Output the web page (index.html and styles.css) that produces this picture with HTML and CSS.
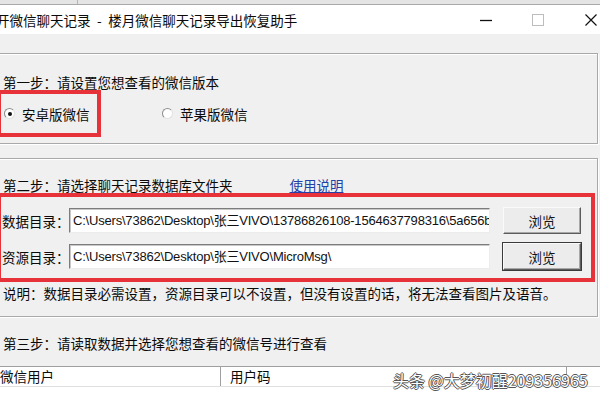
FILE: index.html
```html
<!DOCTYPE html>
<html lang="zh-CN">
<head>
<meta charset="utf-8">
<title>楼月微信聊天记录导出恢复助手</title>
<link rel="stylesheet" href="styles.css">
</head>
<body>
<div class="top-strip"><div class="strip-left"></div></div>
<div class="titlebar">
  <div class="title">开微信聊天记录<span class="dash">-</span>楼月微信聊天记录导出恢复助手</div>
  <div class="controls">
    <svg class="ctl ctl-min" width="12" height="12" viewBox="0 0 12 12"><line x1="0" y1="6.5" x2="12" y2="6.5" stroke="#111" stroke-width="1.3"/></svg>
    <svg class="ctl ctl-max" width="12" height="12" viewBox="0 0 12 12"><rect x="0.5" y="0.5" width="11" height="11" fill="none" stroke="#bdbdbd" stroke-width="1"/></svg>
    <svg class="ctl ctl-close" width="12" height="12" viewBox="0 0 12 12"><path d="M0.5 0.5 L11.5 11.5 M11.5 0.5 L0.5 11.5" stroke="#111" stroke-width="1.2" fill="none"/></svg>
  </div>
</div>
<div class="main">
  <section class="group group-1">
    <div class="step">第一步：请设置您想查看的微信版本</div>
    <div class="versions">
      <div class="mark mark-1">
        <label class="radio"><span class="dot checked"></span>安卓版微信</label>
      </div>
      <label class="radio radio-ios"><span class="dot"></span>苹果版微信</label>
    </div>
  </section>
  <section class="group group-2">
    <div class="step step-2">第二步：请选择聊天记录数据库文件夹<a class="help">使用说明</a></div>
    <div class="mark mark-2">
      <div class="row">
        <span class="label">数据目录：</span>
        <div class="field">C:\Users\73862\Desktop\张三VIVO\13786826108-1564637798316\5a656b</div>
        <button class="btn">浏览</button>
      </div>
      <div class="row">
        <span class="label">资源目录：</span>
        <div class="field">C:\Users\73862\Desktop\张三VIVO\MicroMsg\</div>
        <button class="btn btn-default">浏览</button>
      </div>
    </div>
    <div class="note">说明：数据目录必需设置，资源目录可以不设置，但没有设置的话，将无法查看图片及语音。</div>
  </section>
  <div class="step-3">第三步：请读取数据并选择您想查看的微信号进行查看</div>
  <div class="list">
    <div class="list-head">
      <div class="col col-user">微信用户</div>
      <div class="col col-code">用户码</div>
      <div class="col col-rest"></div>
    </div>
    <div class="list-body"></div>
  </div>
</div>
<div class="watermark">头条 @大梦初醒209356965</div>
</body>
</html>
```

FILE: styles.css
```css
* { box-sizing: border-box; }
html, body { margin: 0; padding: 0; }
body {
  width: 600px;
  height: 400px;
  overflow: hidden;
  position: relative;
  background: #f0f0f0;
  font-family: "Noto Sans CJK SC", sans-serif;
  font-size: 13.5px;
  color: #0a0a0a;
}

.top-strip {
  height: 5px;
  background: #e4e4e4;
  border-bottom: 1px solid #a9a9a9;
  display: flex;
}
.strip-left { width: 78px; border-right: 1px solid #b5b5b5; }

.titlebar {
  height: 29px;
  background: #fff;
  display: flex;
  align-items: center;
}
.title { margin-left: -4px; line-height: 16px; white-space: nowrap; }
.dash { margin: 0 6.5px; }
.controls { margin-left: auto; display: flex; align-items: center; }
.ctl { display: block; }
.ctl-min { margin-right: 40px; }
.ctl-max { margin-right: 41px; }
.ctl-close { margin-right: 3px; }

.main { padding-top: 19px; }

.group {
  margin-left: -10px;
  width: 608px;
  border: 1px solid #a9a9a9;
  box-shadow: inset 1px 1px 0 #fff, 1px 1px 0 #fff;
}
.group-1 { padding: 20px 0 6px; }
.step { line-height: 16px; padding-left: 12px; white-space: nowrap; }

.versions { display: flex; align-items: center; }
.mark { border: 4px solid #e8323a; }
.mark-1 {
  margin-left: 6px;
  width: 104px;
  height: 47px;
  display: flex;
  align-items: center;
  padding-left: 3px;
}
.radio { display: flex; align-items: center; line-height: 16px; white-space: nowrap; }
.dot {
  width: 11px;
  height: 11px;
  border-radius: 50%;
  border: 1px solid;
  border-color: #8c8c8c #e2e2e2 #e2e2e2 #8c8c8c;
  background: #fff;
  margin-right: 7px;
  display: flex;
  align-items: center;
  justify-content: center;
}
.dot.checked::after {
  content: "";
  width: 4px;
  height: 4px;
  border-radius: 50%;
  background: #111;
}
.radio-ios { margin-left: 61px; }

.group-2 { margin-top: 14px; padding: 18px 0 15px; }
.step-2 { display: flex; }
.help { margin-left: 57px; color: #2340a8; text-decoration: underline; }

.mark-2 {
  margin-left: 6px;
  width: 598px;
  padding: 10px 0 8px 1px;
  display: flex;
  flex-direction: column;
  gap: 9px;
}
.row { display: flex; align-items: center; height: 27px; }
.label { width: 67px; line-height: 16px; white-space: nowrap; }
.field {
  width: 421px;
  height: 25px;
  background: #fff;
  border: 1px solid;
  border-color: #7c7c7c #ececec #ececec #7c7c7c;
  box-shadow: inset 1px 1px 0 #c8c8c8;
  padding-left: 3px;
  line-height: 23px;
  white-space: nowrap;
  overflow: hidden;
  font-family: "Liberation Sans", "Noto Sans CJK SC", sans-serif;
  font-size: 13px;
  letter-spacing: -0.2px;
  color: #111;
}
.btn {
  margin-left: 13px;
  width: 78px;
  height: 27px;
  padding: 0;
  background: #ececec;
  border: 1px solid;
  border-color: #fafafa #5c5c5c #5c5c5c #fafafa;
  box-shadow: inset -1px -1px 0 #a8a8a8;
  font-family: "Noto Sans CJK SC", sans-serif;
  font-size: 13.5px;
  color: #141414;
  line-height: 16px;
}
.btn-default { outline: 1px solid #3a3a3a; }

.note { margin-top: 3px; padding-left: 12px; line-height: 16px; white-space: nowrap; }

.step-3 { margin-top: 18px; padding-left: 3px; line-height: 16px; white-space: nowrap; }

.list { margin-top: 15px; }
.list-head {
  display: flex;
  height: 21px;
  border-top: 1px solid #9f9f9f;
  border-bottom: 1px solid #e0e0e0;
  background: #fff;
}
.col {
  line-height: 19px;
  border-right: 1px solid #a0a0a0;
  white-space: nowrap;
}
.col-user { width: 221px; padding-left: 0; }
.col-code { width: 346px; padding-left: 9px; }
.col-rest { flex: 1; border-right: none; }
.list-body { height: 13px; background: #fff; }

.watermark {
  position: absolute;
  left: 393px;
  top: 371px;
  font-size: 16px;
  line-height: 18px;
  color: #fff;
  white-space: nowrap;
  text-shadow: 1px 0 0 #555, -1px 0 0 #555, 0 1px 0 #555, 0 -1px 0 #555;
}
```
